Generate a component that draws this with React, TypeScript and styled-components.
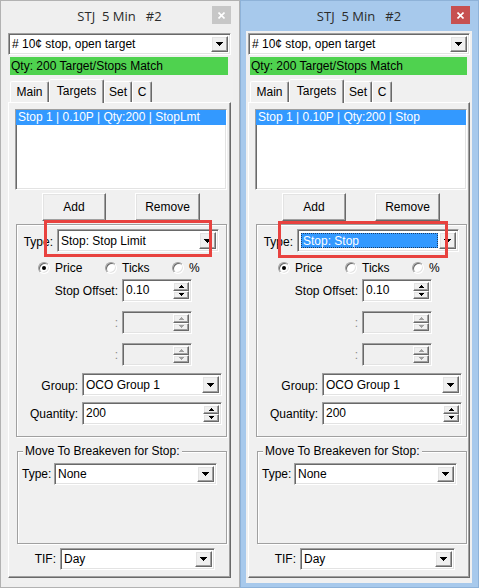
import React from 'react';
import styled, { createGlobalStyle, css } from 'styled-components';

const GlobalStyle = createGlobalStyle`
  html, body { margin: 0; padding: 0; background: #ffffff; }
  body {
    font-family: "Liberation Sans", Arial, sans-serif;
    font-size: 12px;
    color: #000;
  }
  *, *::before, *::after { box-sizing: border-box; }
`;

const sunken = css`
  border: 1px solid;
  border-color: #a0a0a0 #ffffff #ffffff #a0a0a0;
  box-shadow: inset 1px 1px 0 #696969, inset -1px -1px 0 #e3e3e3;
`;

const raised = css`
  border: 1px solid;
  border-color: #ffffff #696969 #696969 #ffffff;
  box-shadow: inset -1px -1px 0 #a0a0a0, inset 1px 1px 0 #e3e3e3;
  background: #f0f0f0;
`;

const etched = css`
  border: 1px solid #a0a0a0;
  box-shadow: inset 1px 1px 0 #ffffff, 1px 1px 0 #ffffff;
`;

const Desktop = styled.div`
  display: flex;
  width: 479px;
  height: 588px;
  overflow: hidden;
`;

const Frame = styled.div<{ $active: boolean; $w: number }>`
  position: relative;
  flex: none;
  width: ${(p) => p.$w}px;
  height: 588px;
  display: flex;
  flex-direction: column;
  background: ${(p) => (p.$active ? '#a7c9ec' : '#efefef')};
  border: 1px solid ${(p) => (p.$active ? '#8eb2d8' : '#b2b2b2')};
  padding: 0 6px 4px 5px;
`;

const TitleBar = styled.div`
  flex: none;
  height: 30px;
  display: grid;
  grid-template-columns: 1fr auto 1fr;
  align-items: start;
`;

const TitleText = styled.div`
  grid-column: 2;
  font-family: "Open Sans", "Liberation Sans", sans-serif;
  font-size: 13px;
  line-height: 30px;
  color: #2b2b2b;
  white-space: pre;
`;

const CloseButton = styled.div<{ $active: boolean }>`
  grid-column: 3;
  justify-self: end;
  margin: 5px 2px 0 0;
  width: 19px;
  height: 18px;
  background: ${(p) => (p.$active ? '#c75050' : '#c7c7c7')};
  display: flex;
  align-items: center;
  justify-content: center;
`;

const Client = styled.div`
  flex: 1;
  background: #f0f0f0;
  display: flex;
  flex-direction: column;
  padding-top: 2px;
`;

const Combo = styled.div<{ $w?: number; $h?: number }>`
  ${sunken};
  flex: none;
  background: #ffffff;
  display: flex;
  padding: 2px;
  width: ${(p) => (p.$w ? `${p.$w}px` : 'auto')};
  height: ${(p) => p.$h ?? 23}px;
`;

const ComboValue = styled.div<{ $selected?: boolean }>`
  flex: 1;
  min-width: 0;
  display: flex;
  align-items: center;
  white-space: nowrap;
  overflow: hidden;
  padding-left: ${(p) => (p.$selected ? 2 : 1)}px;
  margin: ${(p) => (p.$selected ? '1px 1px 1px 1px' : '0')};
  background: ${(p) => (p.$selected ? '#3399ff' : 'transparent')};
  color: ${(p) => (p.$selected ? '#ffffff' : '#000000')};
  outline: ${(p) => (p.$selected ? '1px dotted #1c3d66' : 'none')};
  outline-offset: -1px;
`;

const DropButton = styled.div`
  ${raised};
  flex: none;
  width: 17px;
  display: flex;
  align-items: center;
  justify-content: center;
`;

const TopCombo = styled(Combo)`
  margin: 0 2px;
`;

const StatusBar = styled.div`
  flex: none;
  height: 18px;
  margin: 2px 5px 0 4px;
  background: #4fd24f;
  line-height: 18px;
  padding-left: 1px;
  white-space: nowrap;
`;

const TabStrip = styled.div`
  flex: none;
  display: flex;
  align-items: flex-end;
  height: 23px;
  margin-top: 4px;
  padding-left: 4px;
  position: relative;
  z-index: 1;
`;

const Tab = styled.div<{ $w: number; $selected?: boolean }>`
  flex: none;
  width: ${(p) => p.$w}px;
  height: ${(p) => (p.$selected ? 24 : 21)}px;
  margin-bottom: ${(p) => (p.$selected ? -1 : 0)}px;
  background: #f0f0f0;
  border: 1px solid;
  border-bottom: none;
  border-color: #ffffff #696969 transparent #ffffff;
  box-shadow: inset -1px 0 0 #a0a0a0;
  border-radius: 2px 2px 0 0;
  text-align: center;
  line-height: 14px;
  padding-top: ${(p) => (p.$selected ? 4 : 3)}px;
`;

const TabPanel = styled.div`
  flex: none;
  margin: 0 2px;
  height: 476px;
  border: 1px solid;
  border-color: #ffffff #696969 #696969 #ffffff;
  box-shadow: inset -1px -1px 0 #a0a0a0;
  display: flex;
  flex-direction: column;
  padding-top: 6px;
`;

const ListBox = styled.div`
  ${sunken};
  flex: none;
  margin-left: 6px;
  width: 212px;
  height: 81px;
  background: #ffffff;
`;

const ListItem = styled.div<{ $selected?: boolean }>`
  height: 15px;
  line-height: 15px;
  padding-left: 2px;
  white-space: nowrap;
  overflow: hidden;
  background: ${(p) => (p.$selected ? '#3399ff' : 'transparent')};
  color: ${(p) => (p.$selected ? '#ffffff' : '#000000')};
`;

const ButtonRow = styled.div`
  flex: none;
  display: flex;
  gap: 29px;
  margin: 3px 0 0 33px;
`;

const PushButton = styled.div<{ $w: number }>`
  ${raised};
  width: ${(p) => p.$w}px;
  height: 28px;
  display: flex;
  align-items: center;
  justify-content: center;
`;

const InnerPanel = styled.div`
  ${etched};
  flex: none;
  margin: 3px 0 0 7px;
  width: 211px;
  height: 213px;
  display: flex;
  flex-direction: column;
`;

const FieldRow = styled.div<{ $mt: number; $h?: number; $ml?: number }>`
  flex: none;
  display: flex;
  align-items: center;
  height: ${(p) => p.$h ?? 23}px;
  margin-top: ${(p) => p.$mt}px;
  margin-left: ${(p) => p.$ml ?? 0}px;
`;

const FieldLabel = styled.div<{ $w: number; $muted?: boolean; $dy?: number }>`
  flex: none;
  width: ${(p) => p.$w}px;
  text-align: right;
  padding-right: 4px;
  padding-top: ${(p) => (p.$dy ?? 0) * 2}px;
  white-space: nowrap;
  color: ${(p) => (p.$muted ? '#8a8a8a' : '#000000')};
`;

const RadioRow = styled.div`
  flex: none;
  display: flex;
  align-items: center;
  height: 14px;
  margin-top: 9px;
  padding-left: 21px;
`;

const RadioItem = styled.div<{ $w?: number }>`
  display: flex;
  align-items: center;
  gap: 5px;
  width: ${(p) => (p.$w ? `${p.$w}px` : 'auto')};
`;

const RadioCircle = styled.span<{ $checked?: boolean }>`
  flex: none;
  width: 12px;
  height: 12px;
  border-radius: 50%;
  border: 1px solid;
  border-color: #a0a0a0 #ffffff #ffffff #a0a0a0;
  box-shadow: inset 1px 1px 0 #696969, inset -1px -1px 0 #e3e3e3;
  background: #ffffff;
  display: flex;
  align-items: center;
  justify-content: center;
  &::after {
    content: '';
    width: 4px;
    height: 4px;
    border-radius: 50%;
    background: ${(p) => (p.$checked ? '#000000' : 'transparent')};
  }
`;

const SpinBox = styled.div<{ $w: number; $disabled?: boolean }>`
  ${sunken};
  flex: none;
  width: ${(p) => p.$w}px;
  height: 23px;
  display: flex;
  padding: 2px;
  background: ${(p) => (p.$disabled ? '#f0f0f0' : '#ffffff')};
`;

const SpinValue = styled.div`
  flex: 1;
  padding-left: 1px;
  line-height: 16px;
`;

const SpinButtons = styled.div`
  flex: none;
  width: 16px;
  display: flex;
  flex-direction: column;
`;

const SpinButton = styled.div`
  ${raised};
  flex: 1;
  display: flex;
  align-items: center;
  justify-content: center;
`;

const GroupBox = styled.fieldset`
  ${etched};
  flex: none;
  margin: 7px 0 0 8px;
  width: 210px;
  padding: 5px 0 58px 5px;
  min-width: 0;
`;

const GroupLegend = styled.legend`
  padding: 0 2px;
  line-height: 14px;
  background: #f0f0f0;
`;

const Highlight = styled.div`
  position: absolute;
  border: 3px solid #e8423f;
  pointer-events: none;
`;

const DownArrow = ({ color = '#000' }: { color?: string }) => (
  <svg width="7" height="4" viewBox="0 0 7 4" shapeRendering="crispEdges">
    <path d="M0 0h7L3.5 4z" fill={color} />
  </svg>
);

const SmallArrow = ({ up, color = '#000' }: { up?: boolean; color?: string }) => (
  <svg width="5" height="3" viewBox="0 0 5 3" shapeRendering="crispEdges">
    <path d={up ? 'M2.5 0L5 3H0z' : 'M0 0h5L2.5 3z'} fill={color} />
  </svg>
);

const CloseGlyph = () => (
  <svg width="7" height="7" viewBox="0 0 7 7">
    <path d="M0.5 0.5L6.5 6.5M6.5 0.5L0.5 6.5" stroke="#fff" strokeWidth="1.6" />
  </svg>
);

const ComboField = ({
  value,
  w,
  h,
  selected,
}: {
  value: string;
  w?: number;
  h?: number;
  selected?: boolean;
}) => (
  <Combo $w={w} $h={h}>
    <ComboValue $selected={selected}>{value}</ComboValue>
    <DropButton>
      <DownArrow />
    </DropButton>
  </Combo>
);

const Spin = ({ value, w, disabled }: { value?: string; w: number; disabled?: boolean }) => {
  const c = disabled ? '#a0a0a0' : '#000';
  return (
    <SpinBox $w={w} $disabled={disabled}>
      <SpinValue>{value}</SpinValue>
      <SpinButtons>
        <SpinButton>
          <SmallArrow up color={c} />
        </SpinButton>
        <SpinButton>
          <SmallArrow color={c} />
        </SpinButton>
      </SpinButtons>
    </SpinBox>
  );
};

type WinProps = {
  active: boolean;
  width: number;
  listText: string;
  typeText: string;
  typeSelected?: boolean;
  box: { left: number; top: number; width: number; height: number };
};

const Window = ({ active, width, listText, typeText, typeSelected, box }: WinProps) => (
  <Frame $active={active} $w={width}>
    <TitleBar>
      <TitleText>{'STJ  5 Min   #2'}</TitleText>
      <CloseButton $active={active}>
        <CloseGlyph />
      </CloseButton>
    </TitleBar>
    <Client>
      <TopCombo $h={22}>
        <ComboValue>{'# 10¢ stop, open target'}</ComboValue>
        <DropButton>
          <DownArrow />
        </DropButton>
      </TopCombo>
      <StatusBar>Qty: 200 Target/Stops Match</StatusBar>
      <TabStrip>
        <Tab $w={39}>Main</Tab>
        <Tab $w={55} $selected>
          Targets
        </Tab>
        <Tab $w={28}>Set</Tab>
        <Tab $w={20}>C</Tab>
      </TabStrip>
      <TabPanel>
        <ListBox>
          <ListItem $selected>{listText}</ListItem>
        </ListBox>
        <ButtonRow>
          <PushButton $w={64}>Add</PushButton>
          <PushButton $w={65}>Remove</PushButton>
        </ButtonRow>
        <InnerPanel>
          <FieldRow $mt={4}>
            <FieldLabel $w={40} $dy={1}>
              Type:
            </FieldLabel>
            <ComboField value={typeText} w={162} selected={typeSelected} />
          </FieldRow>
          <RadioRow>
            <RadioItem $w={67}>
              <RadioCircle $checked />
              Price
            </RadioItem>
            <RadioItem $w={67}>
              <RadioCircle />
              Ticks
            </RadioItem>
            <RadioItem>
              <RadioCircle />%
            </RadioItem>
          </RadioRow>
          <FieldRow $mt={4}>
            <FieldLabel $w={105}>Stop Offset:</FieldLabel>
            <Spin value="0.10" w={70} />
          </FieldRow>
          <FieldRow $mt={9}>
            <FieldLabel $w={105} $muted>
              :
            </FieldLabel>
            <Spin w={70} disabled />
          </FieldRow>
          <FieldRow $mt={9}>
            <FieldLabel $w={105} $muted>
              :
            </FieldLabel>
            <Spin w={70} disabled />
          </FieldRow>
          <FieldRow $mt={7}>
            <FieldLabel $w={65} $dy={1}>
              Group:
            </FieldLabel>
            <ComboField value="OCO Group 1" w={140} />
          </FieldRow>
          <FieldRow $mt={6}>
            <FieldLabel $w={65}>Quantity:</FieldLabel>
            <Spin value="200" w={140} />
          </FieldRow>
        </InnerPanel>
        <GroupBox>
          <GroupLegend>Move To Breakeven for Stop:</GroupLegend>
          <FieldRow $mt={0} $h={22} $ml={-1}>
            <FieldLabel $w={32}>Type:</FieldLabel>
            <ComboField value="None" w={163} h={22} />
          </FieldRow>
        </GroupBox>
        <FieldRow $mt={4} $h={22}>
          <FieldLabel $w={51}>TIF:</FieldLabel>
          <ComboField value="Day" w={155} h={22} />
        </FieldRow>
      </TabPanel>
    </Client>
    <Highlight
      style={{ left: box.left, top: box.top, width: box.width, height: box.height }}
    />
  </Frame>
);

export default function App() {
  return (
    <>
      <GlobalStyle />
      <Desktop>
        <Window
          active={false}
          width={240}
          listText="Stop 1 | 0.10P | Qty:200 | StopLmt"
          typeText="Stop: Stop Limit"
          box={{ left: 43, top: 219, width: 168, height: 37 }}
        />
        <Window
          active
          width={239}
          listText="Stop 1 | 0.10P | Qty:200 | Stop"
          typeText="Stop: Stop"
          typeSelected
          box={{ left: 37, top: 220, width: 170, height: 37 }}
        />
      </Desktop>
    </>
  );
}
